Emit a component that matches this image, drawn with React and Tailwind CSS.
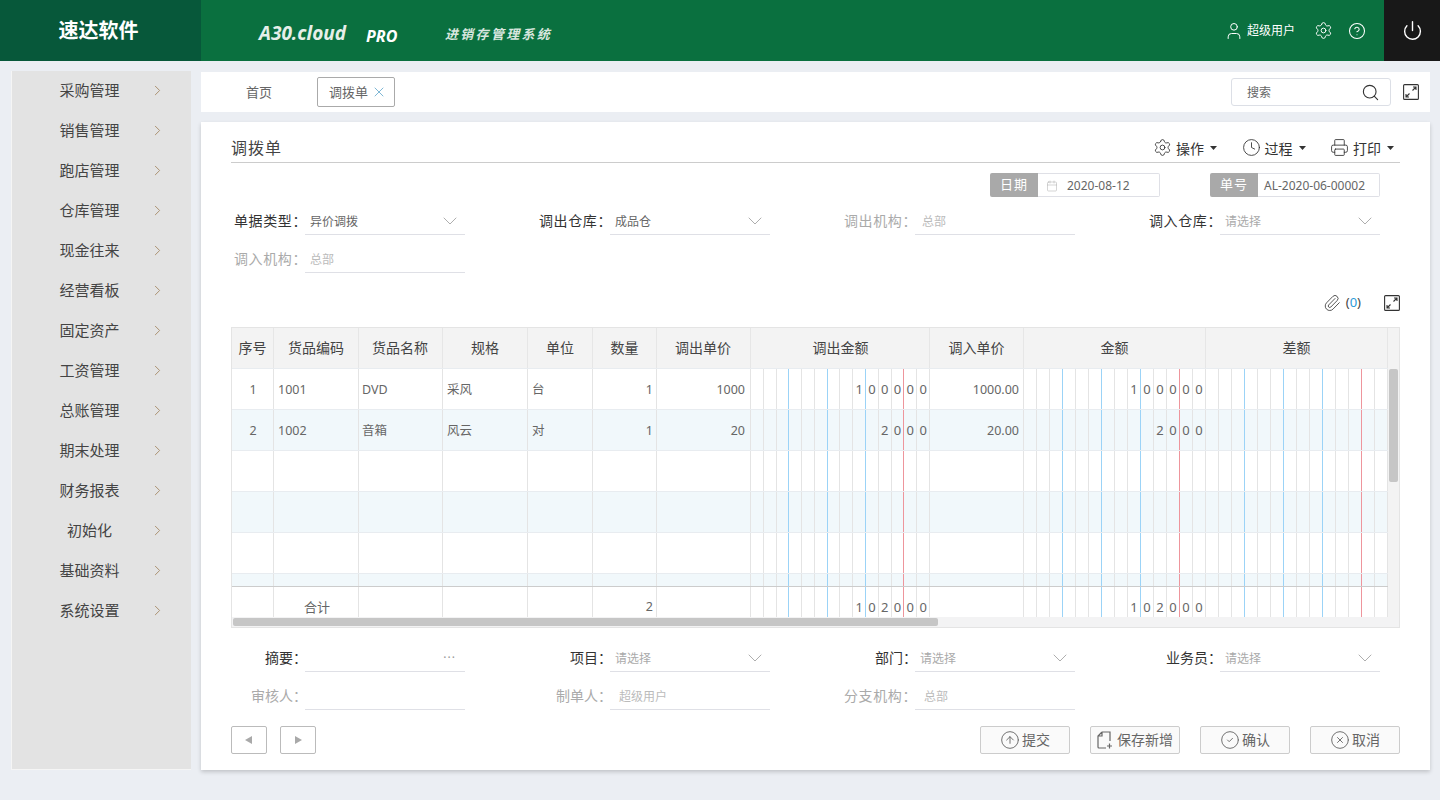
import React from "react";
import {
  ChevronRight,
  ChevronDown,
  CircleArrowUp,
  CircleCheck,
  CircleHelp,
  CircleX,
  Calendar,
  Clock,
  Paperclip,
  Power,
  Printer,
  Search,
  Settings,
  User,
  X,
} from "lucide-react";

const menus = ["采购管理", "销售管理", "跑店管理", "仓库管理", "现金往来", "经营看板", "固定资产", "工资管理", "总账管理", "期末处理", "财务报表", "初始化", "基础资料", "系统设置"];

const rows = [
  { no: "1", code: "1001", name: "DVD", spec: "采风", unit: "台", qty: "1", price: "1000", out: "100000", inPrice: "1000.00", amount: "100000" },
  { no: "2", code: "1002", name: "音箱", spec: "风云", unit: "对", qty: "1", price: "20", out: "2000", inPrice: "20.00", amount: "2000" },
  {},
  {},
  {},
];

const ExpandIcon = () => (
  <svg width="16" height="16" viewBox="0 0 16 16" fill="none" stroke="#333" strokeWidth="1.1">
    <rect x="0.6" y="0.6" width="14.8" height="14.8" rx="1" />
    <path d="M9.5 6.5 13 3M10 3h3v3M6.5 9.5 3 13M3 10v3h3" />
  </svg>
);

const Caret = () => (
  <svg width="7" height="4" viewBox="0 0 7 4" className="ml-[6px]">
    <polygon points="0,0 7,0 3.5,4" fill="#333" />
  </svg>
);

const DocPlus = () => (
  <svg width="16" height="18" viewBox="0 0 16 18" fill="none" stroke="#666" strokeWidth="1.2" className="mr-[2px]">
    <path d="M5 1h8v9M5 1 1 5v11a1 1 0 0 0 1 1h7M5 1v4H1M10 15h5M12.5 12.5v5" />
  </svg>
);

// 14 narrow cells used by the amount columns, digits sit at the right end
const DigitCells = ({ value = "" }) => {
  const digits = value.padStart(14, " ").split("");
  return (
    <div className="grid grid-cols-14 h-full">
      {digits.map((d, i) => {
        let line = "border-[#e4e4e4]";
        if (i === 2 || i === 5 || i === 8) line = "border-[#9bd3f7]";
        if (i === 11) line = "border-[#ee959c]";
        return (
          <div key={i} className={`border-r ${line} flex items-center justify-center pt-[2px] text-[13px] text-[#666]`}>
            {d.trim()}
          </div>
        );
      })}
    </div>
  );
};

const HeadCell = ({ w, children }) => (
  <div className={`${w} h-full shrink-0 border-r border-[#e6e6e6] flex items-center justify-center pb-[1px]`}>{children}</div>
);

const Cell = ({ w, align = "justify-start px-[4px]", children }) => (
  <div className={`${w} h-full shrink-0 border-r border-[#e4e4e4] flex items-center pt-[2px] ${align}`}>{children}</div>
);

const RowCells = ({ r }) => (
  <>
    <Cell w="w-[42px]" align="justify-center pl-[1px]">{r.no}</Cell>
    <Cell w="w-[85px]">{r.code}</Cell>
    <Cell w="w-[84px]" align="justify-start px-[3px]">{r.name}</Cell>
    <Cell w="w-[85px]">{r.spec}</Cell>
    <Cell w="w-[65px]">{r.unit}</Cell>
    <Cell w="w-[64px]" align="justify-end px-[3px]">{r.qty}</Cell>
    <Cell w="w-[94px]" align="justify-end px-[5px]">{r.price}</Cell>
    <div className="w-[179px] h-full shrink-0"><DigitCells value={r.out} /></div>
    <Cell w="w-[94px]" align="justify-end px-[4px]">{r.inPrice}</Cell>
    <div className="w-[182px] h-full shrink-0"><DigitCells value={r.amount} /></div>
    <div className="w-[182px] h-full shrink-0"><DigitCells /></div>
  </>
);

const Field = ({ label, value, placeholder, arrow, dots, disabled, pad = "pl-[5px]" }) => (
  <div className="flex h-[28px]">
    <div className={`w-[76px] -mr-[2px] shrink-0 text-right text-[14px] leading-[28px] whitespace-nowrap ${label.length === 5 ? "tracking-[0.6px]" : ""} ${disabled ? "text-[#aaa]" : "text-[#333]"}`}>{label}</div>
    <div className={`w-[160px] border-b border-[#dfe0e6] flex items-center justify-between ${pad} pr-[3px] text-[12px]`}>
      <span className={`pt-[2px] ${disabled ? "text-[#bbb]" : placeholder ? "text-[#aaa]" : "text-[#666]"}`}>{value || placeholder}</span>
      {arrow && <ChevronDown size={24} strokeWidth={0.8} className="text-[#999]" />}
      {dots && <span className="text-[#999] tracking-[1px] pr-[6px]">···</span>}
    </div>
  </div>
);

const DateBox = ({ label, children, w }) => (
  <div className={`${w} h-[24px] flex`}>
    <div className="w-[48px] shrink-0 bg-[#a9a9a9] text-white text-[13px] tracking-[1px] flex items-center justify-center rounded-l-[2px]">{label}</div>
    <div className="flex-1 border border-l-0 border-[#dfe0e6] flex items-center pt-[1px] text-[12px] text-[#666] rounded-r-[2px]">{children}</div>
  </div>
);

const ActionBtn = ({ icon, children }) => (
  <button className="flex items-center text-[14px] text-[#333]">
    {icon}
    <span className="ml-[4px] pt-[1px]">{children}</span>
    <Caret />
  </button>
);

const FootBtn = ({ icon, children }) => (
  <button className="w-[90px] h-[28px] bg-[#fafafa] border border-[#ccc] rounded-[2px] flex items-center justify-center gap-[2px] pb-[1px] text-[14px] text-[#666]">
    {icon}
    {children}
  </button>
);

export default function App() {
  return (
    <div className="w-[1440px] h-[800px] overflow-hidden bg-[#ebeef3] font-['Noto_Sans','Noto_Sans_CJK_SC',sans-serif]">
      {/* top bar */}
      <header className="h-[61px] flex bg-[#0a703f] text-white">
        <div className="w-[201px] bg-[#07583a] flex items-center justify-center pr-[4px] text-[20px] font-bold">速达软件</div>
        <div className="flex-1 flex items-center pl-[58px]">
          <span className="w-[107px] mt-[5px] italic font-bold text-[19px] text-[#e6efe9]">A30.cloud</span>
          <span className="w-[79px] mt-[11px] italic font-bold text-[16px]">PRO</span>
          <span className="mt-[9px] italic font-bold text-[13px] tracking-[2.3px] text-[#d8e6de]">进销存管理系统</span>
        </div>
        <div className="flex items-center pr-[18px] text-[12px]">
          <User size={20} strokeWidth={1.2} />
          <span className="ml-[3px] pt-[1px]">超级用户</span>
          <Settings size={19} strokeWidth={1.2} className="ml-[19px]" />
          <CircleHelp size={18} strokeWidth={1.4} className="ml-[15px]" />
        </div>
        <div className="w-[56px] bg-[#181818] flex items-center justify-center">
          <Power size={21} strokeWidth={1.6} />
        </div>
      </header>

      <div className="flex pl-[11px]">
        {/* left menu */}
        <aside className="w-[180px] h-[699px] mt-[10px] bg-[#e3e3e3] border-l border-b border-[#f5f5f5]">
          <div className="-mt-[1px]">
            {menus.map((m) => (
              <div key={m} className="h-[40px] flex items-center text-[15px] text-[#444]">
                <span className="w-[154px] pl-[1px] text-center">{m}</span>
                <ChevronRight size={17} strokeWidth={1.3} className="-ml-[17px] text-[#a68a68]" />
              </div>
            ))}
          </div>
        </aside>

        <main className="w-[1229px] ml-[10px] mt-[11px]">
          {/* tabs */}
          <div className="h-[40px] bg-white flex items-center text-[13px] text-[#666]">
            <span className="ml-[45px] pt-[1px]">首页</span>
            <div className="ml-[45px] w-[78px] h-[30px] border border-[#aaa] rounded-[2px] flex items-center pl-[11px]">
              <span className="pt-[1px]">调拨单</span>
              <X size={16} strokeWidth={1.1} className="ml-[3px] text-[#4f9cc4]" />
            </div>
            <div className="ml-auto w-[160px] h-[28px] border border-[#dcdfe6] rounded-[3px] flex items-center justify-between pl-[15px] pr-[10px] text-[12px]">
              <span className="pt-[1px]">搜索</span>
              <Search size={19} strokeWidth={1.4} className="text-[#333]" />
            </div>
            <div className="ml-[12px] mr-[11px]"><ExpandIcon /></div>
          </div>

          {/* bill */}
          <section className="h-[648px] mt-[10px] px-[30px] bg-white shadow-[0_2px_4px_rgba(0,0,0,0.18)]">
            <div className="pt-[13px]">
              <div className="h-[28px] border-b border-[#ccc] flex items-center justify-between pb-[2px]">
                <span className="text-[16px] tracking-[1px] text-[#444]">调拨单</span>
                <div className="flex items-center gap-[24.5px] pr-[6px]">
                  <ActionBtn icon={<Settings size={19} strokeWidth={1.1} />}>操作</ActionBtn>
                  <ActionBtn icon={<Clock size={19} strokeWidth={1.1} />}>过程</ActionBtn>
                  <ActionBtn icon={<Printer size={19} strokeWidth={1.1} />}>打印</ActionBtn>
                </div>
              </div>
            </div>

            <div className="mt-[10px] flex justify-end gap-[50px] pr-[20px]">
              <DateBox label="日期" w="w-[170px]">
                <Calendar size={12} strokeWidth={1} className="ml-[8px] mr-[9px] text-[#aaa]" />
                2020-08-12
              </DateBox>
              <DateBox label="单号" w="w-[170px]">
                <span className="pl-[6px]">AL-2020-06-00002</span>
              </DateBox>
            </div>

            <div className="mt-[10px] grid grid-cols-[repeat(4,234px)] gap-x-[71px] gap-y-[10px]">
              <Field label="单据类型：" value="异价调拨" arrow />
              <Field label="调出仓库：" value="成品仓" arrow />
              <Field label="调出机构：" value="总部" disabled pad="pl-[7px]" />
              <Field label="调入仓库：" placeholder="请选择" arrow />
              <Field label="调入机构：" value="总部" disabled />
            </div>

            <div className="mt-[20px] h-[20px] flex items-center justify-end">
              <Paperclip size={18} strokeWidth={1.2} className="text-[#444]" />
              <span className="ml-[5px] text-[13px] text-[#444]">(<span className="text-[#2d9ad8]">0</span>)</span>
              <div className="ml-[23px]"><ExpandIcon /></div>
            </div>

            {/* grid */}
            <div className="mt-[14px] w-[1169px] h-[301px] border border-[#e4e4e4] flex flex-col">
              <div className="flex h-[289px]">
                <div className="w-[1156px] shrink-0">
                  <div className="h-[41px] flex bg-[#f3f3f3] border-b border-[#e8ecf0] text-[14px] text-[#444]">
                    <HeadCell w="w-[42px]">序号</HeadCell>
                    <HeadCell w="w-[85px]">货品编码</HeadCell>
                    <HeadCell w="w-[84px]"><span className="pr-[1px]">货品名称</span></HeadCell>
                    <HeadCell w="w-[85px]">规格</HeadCell>
                    <HeadCell w="w-[65px]">单位</HeadCell>
                    <HeadCell w="w-[64px]">数量</HeadCell>
                    <HeadCell w="w-[94px]"><span className="pr-[1px]">调出单价</span></HeadCell>
                    <HeadCell w="w-[179px]"><span className="pl-[1px]">调出金额</span></HeadCell>
                    <HeadCell w="w-[94px]">调入单价</HeadCell>
                    <HeadCell w="w-[182px]">金额</HeadCell>
                    <HeadCell w="w-[182px]">差额</HeadCell>
                  </div>
                  <div className="h-[217px] overflow-hidden text-[12.5px] text-[#666]">
                    {rows.map((r, i) => (
                      <div key={i} className={`h-[41px] flex border-b border-[#e8ecf0] ${i % 2 === 1 ? "bg-[#f1f8fb]" : "bg-white"}`}>
                        <RowCells r={r} />
                      </div>
                    ))}
                    <div className="h-[12px] flex bg-[#f1f8fb]">
                      <RowCells r={{}} />
                    </div>
                  </div>
                  <div className="h-[31px] flex border-t border-[#ccc] text-[12.5px] text-[#666]">
                    <Cell w="w-[42px]" />
                    <Cell w="w-[85px]" align="justify-center items-end"><span className="pl-[2px] text-[13px] leading-[20px]">合计</span></Cell>
                    <Cell w="w-[84px]" />
                    <Cell w="w-[85px]" />
                    <Cell w="w-[65px]" />
                    <Cell w="w-[64px]" align="justify-end px-[3px] items-end"><span className="leading-[20px]">2</span></Cell>
                    <Cell w="w-[94px]" />
                    <div className="w-[179px] shrink-0 [&>div>div]:items-end [&>div>div]:leading-[20px]"><DigitCells value="102000" /></div>
                    <Cell w="w-[94px]" />
                    <div className="w-[182px] shrink-0 [&>div>div]:items-end [&>div>div]:leading-[20px]"><DigitCells value="102000" /></div>
                    <div className="w-[182px] shrink-0"><DigitCells /></div>
                  </div>
                </div>
                {/* vertical scrollbar */}
                <div className="flex-1 bg-[#f3f3f3] pt-[41px] pl-[1px]">
                  <div className="w-[9px] h-[113px] bg-[#c6c6c6] rounded-[2px]" />
                </div>
              </div>
              {/* horizontal scrollbar */}
              <div className="h-[10px] bg-[#f3f3f4] py-[1px] pl-[1px]">
                <div className="w-[705px] h-[8px] bg-[#c6c6c6] rounded-[2px]" />
              </div>
            </div>

            <div className="mt-[16px] grid grid-cols-[repeat(4,234px)] gap-x-[71px] gap-y-[10px]">
              <Field label="摘要：" dots />
              <Field label="项目：" placeholder="请选择" arrow />
              <Field label="部门：" placeholder="请选择" arrow />
              <Field label="业务员：" placeholder="请选择" arrow />
              <Field label="审核人：" value="" disabled />
              <Field label="制单人：" value="超级用户" disabled pad="pl-[9px]" />
              <Field label="分支机构：" value="总部" disabled pad="pl-[9px]" />
            </div>

            <div className="mt-[16px] flex items-center">
              <button className="w-[36px] h-[28px] border border-[#bbb] rounded-[2px] flex items-center justify-center">
                <svg width="8" height="8" viewBox="0 0 8 8"><polygon points="7,0 7,8 0,4" fill="#a9a9a9" /></svg>
              </button>
              <button className="ml-[13px] w-[36px] h-[28px] border border-[#bbb] rounded-[2px] flex items-center justify-center">
                <svg width="8" height="8" viewBox="0 0 8 8"><polygon points="1,0 1,8 8,4" fill="#a9a9a9" /></svg>
              </button>
              <div className="ml-auto flex gap-[20px]">
                <FootBtn icon={<CircleArrowUp size={20} strokeWidth={1.1} />}>提交</FootBtn>
                <FootBtn icon={<DocPlus />}>保存新增</FootBtn>
                <FootBtn icon={<CircleCheck size={20} strokeWidth={1.1} />}>确认</FootBtn>
                <FootBtn icon={<CircleX size={20} strokeWidth={1.1} />}>取消</FootBtn>
              </div>
            </div>
          </section>
        </main>
      </div>
    </div>
  );
}
